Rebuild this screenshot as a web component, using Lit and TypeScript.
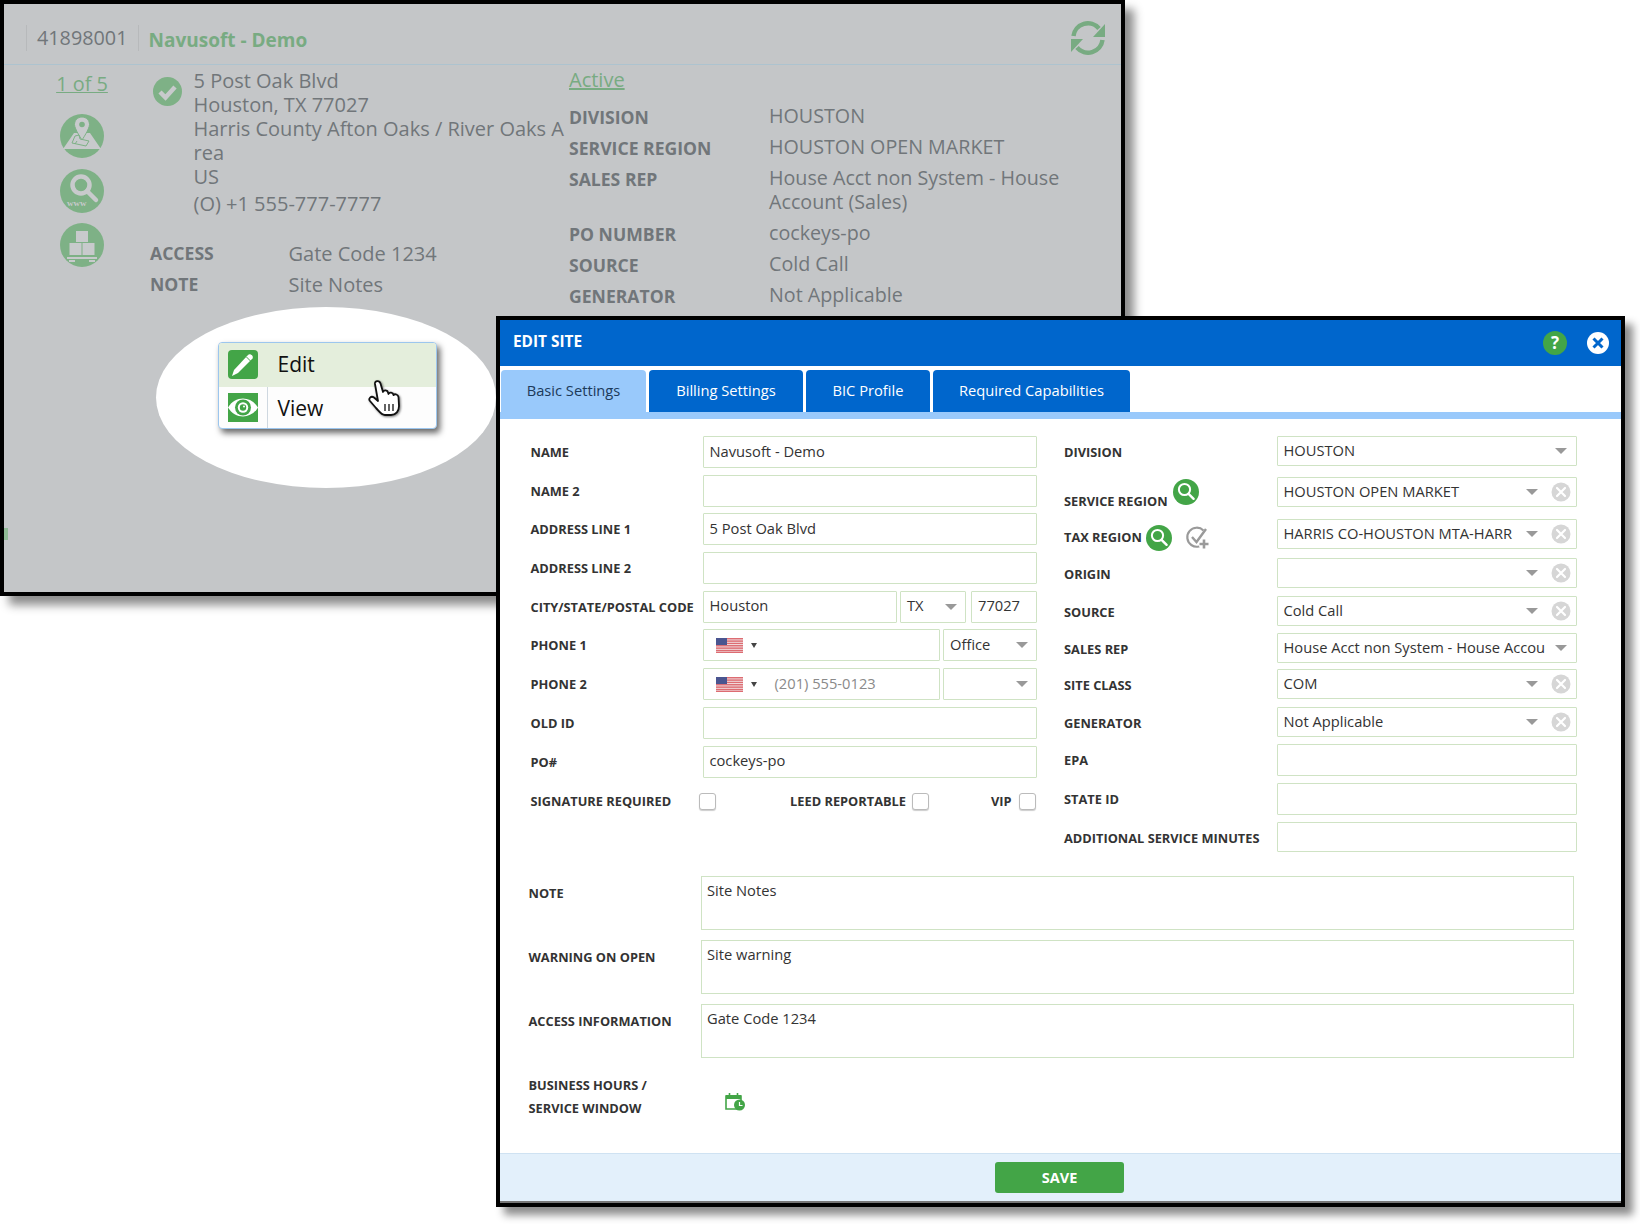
import { LitElement, html, css, svg } from "lit";
import { customElement } from "lit/decorators.js";

const caret = html`<i class="caret"></i>`;
const clear = html`<svg class="clr" viewBox="0 0 20 20"><circle cx="10" cy="10" r="9.5" fill="#d6d6d6"/><path d="M6 6l8 8M14 6l-8 8" stroke="#fff" stroke-width="2.2" stroke-linecap="round"/></svg>`;
const flag = html`<svg class="flag" viewBox="0 0 27 16" preserveAspectRatio="none">
  <rect width="27" height="16" fill="#f4f0f2"/>
  ${[0, 2.5, 5, 7.5, 10, 12.5].map((y) => svg`<rect y="${y}" width="27" height="1.6" fill="#dd6c72"/>`)}
  <rect y="14.6" width="27" height="1.4" fill="#dd6c72"/>
  <rect width="11" height="7.5" fill="#4a5590"/>
</svg>`;
const search = html`<svg class="srch" viewBox="0 0 26 26"><circle cx="13" cy="13" r="13" fill="#43a547"/><circle cx="11.5" cy="10.5" r="5.6" fill="none" stroke="#fff" stroke-width="2"/><path d="M15.6 14.8l5 5" stroke="#fff" stroke-width="2.4" stroke-linecap="round"/></svg>`;

type Row = { label: string; value?: string; clear?: boolean; caret?: boolean; cls?: string };
const rightRows: Row[] = [
  { label: "DIVISION", value: "HOUSTON", caret: true },
  { label: "SERVICE REGION", value: "HOUSTON OPEN MARKET", caret: true, clear: true, cls: "sr" },
  { label: "TAX REGION", value: "HARRIS CO-HOUSTON MTA-HARR", caret: true, clear: true, cls: "tr" },
  { label: "ORIGIN", value: "", caret: true, clear: true },
  { label: "SOURCE", value: "Cold Call", caret: true, clear: true },
  { label: "SALES REP", value: "House Acct non System - House Accou", caret: true },
  { label: "SITE CLASS", value: "COM", caret: true, clear: true },
  { label: "GENERATOR", value: "Not Applicable", caret: true, clear: true },
  { label: "EPA", cls: "tall" },
  { label: "STATE ID", cls: "tall" },
  { label: "ADDITIONAL SERVICE MINUTES" },
];
const simple = (label: string, value = "") => html`<div class="frow"><span class="lb">${label}</span><div class="inp grow">${value}</div></div>`;

@customElement("app-root")
export class AppRoot extends LitElement {
  static styles = css`
    :host { display: block; position: relative; width: 1640px; height: 1224px; background: #fff; overflow: hidden;
      font-family: "Open Sans", "Noto Sans", sans-serif; color: #333; }
    * { box-sizing: border-box; }

    .back { position: absolute; left: 0; top: 0; width: 1125px; height: 596px; border: 4px solid #000; background: #c4c6c8;
      box-shadow: 9px 9px 9px rgba(0,0,0,.45); color: #71767a; font-size: 20px; }
    .bh { height: 61px; border-bottom: 1px solid #adc3cf; display: flex; align-items: center; padding: 10px 14px 0 22px; }
    .bid { border-left: 1px solid #b7b9bb; border-right: 1px solid #b7b9bb; padding: 0 11px 0 10px; line-height: 26px; margin-top: -2px; font-size: 19.8px; }
    .bname { color: #78ab82; font-weight: 700; font-size: 19px; margin-left: 9px; margin-top: 2px; flex: 1; }
    .sync { width: 38px; height: 38px; margin-top: -2px; }
    .bb { display: grid; grid-template-columns: 145px 420px 1fr; }
    .nav { display: flex; flex-direction: column; align-items: center; padding: 5px 0 0 1px; width: 155px; }
    .nav a { text-decoration: underline; color: #78ab82; line-height: 28px; margin-bottom: 16px; font-size: 19.9px; }
    .nav svg { width: 44px; height: 44px; margin-bottom: 10.5px; }
    .mid { padding: 4px 0 0 4px; }
    .addr { display: grid; grid-template-columns: 40.5px 1fr; line-height: 24px; white-space: nowrap; height: 164px; }
    .addr svg { width: 29px; height: 29px; margin-top: 8px; }
    .ph { display: block; margin-top: 3px; }
    .kv { display: grid; grid-template-columns: 138.5px 1fr; line-height: 31px; margin: 5px 0 0 -3px; }
    .kv b, .rtg b { font-size: 17.6px; }
    .rt a { display: block; color: #78ab82; text-decoration: underline; line-height: 28px; margin-top: 1px; }
    .rtg { display: grid; grid-template-columns: 200px 340px; margin-top: 7px; }
    .rtg b { line-height: 30px; padding-top: .5px; }
    .rtg span { line-height: 24px; padding: 3px 0 4px; font-size: 19.7px; }

    .oval { position: absolute; left: 156px; top: 307px; width: 340px; height: 181px; border-radius: 50%; background: #fff; }
    .menu { position: absolute; left: 218px; top: 342px; width: 219px; height: 87px; border: 1px solid #9cc6ee; border-radius: 4px;
      background: #fdfdfd; box-shadow: 3px 4px 6px rgba(0,0,0,.6); color: #111; font-size: 21px; overflow: hidden; }
    .mi { display: flex; align-items: center; height: 44px; padding-left: 9px; }
    .mi + .mi { height: 42px; }
    .mi.on { background: #e4eedc; padding-bottom: 2px; }
    .mi.on svg { margin-top: 2px; }
    .mi svg { width: 30px; height: 30px; margin-right: 19.5px; flex: none; }
    .mi:not(.on) { background: linear-gradient(to right, transparent 48px, #cfd8e0 48px, #cfd8e0 49px, transparent 49px); }
    .hand { position: absolute; left: 368px; top: 380px; width: 34px; height: 37px; filter: drop-shadow(1px 1px 1px rgba(0,0,0,.5)); }
    .speck { position: absolute; left: 4px; top: 528px; width: 4px; height: 12px; background: #8fba95; }

    .modal { position: absolute; left: 496px; top: 316px; width: 1129px; height: 891px; border: 4px solid #000; background: #fff;
      box-shadow: 8px 8px 8px rgba(0,0,0,.45); display: flex; flex-direction: column; }
    .mh { height: 46px; background: #0066cc; color: #fff; display: flex; align-items: center; padding: 0 12px 3px 13px; flex: none; }
    .mh b { flex: 1; font-size: 15.400px; }
    .mh svg { display: block; margin-top: 2px; }
    .tabs { height: 53px; padding-top: 4px; border-bottom: 7px solid #99c9fb; display: flex; gap: 3px; flex: none; padding-left: 1px; }
    .tab { background: #0066cc; color: #fff; border-radius: 4px 4px 0 0; display: flex; align-items: center; justify-content: center; font-size: 14.7px; font-weight: 500; padding-bottom: 2px; }
    .tab.on { background: #99c9fb; color: #1c3a5a; }
    .t1 { width: 145px; } .t2 { width: 154px; } .t3 { width: 124px; } .t4 { width: 197px; }

    .top { display: grid; grid-template-columns: 506px 512.5px; column-gap: 27.5px; padding: 17px 0 0 30.5px; height: 457px; flex: none; }
    .lcol { display: flex; flex-direction: column; gap: 6.7px; }
    .frow { display: flex; align-items: center; height: 32px; gap: 3.5px; }
    .lb { font-size: 12.8px; font-weight: 700; color: #333; white-space: nowrap; }
    .frow > .lb { width: 172px; flex: none; margin-right: -3.5px; }
    .inp, .sel { height: 100%; border: 1px solid #cfe3c4; background: #fff; border-radius: 1px; font-size: 14.7px; color: #333;
      padding: 0 5px 3px 6px; display: flex; align-items: center; white-space: nowrap; position: relative; }
    .grow { flex: 1; }
    .caret { position: absolute; width: 0; height: 0; border-left: 6px solid transparent; border-right: 6px solid transparent; border-top: 6px solid #999; top: 50%; margin-top: -3px; }
    .sel .caret { right: 8px; }
    .w1 { width: 194px; } .w2 { width: 66px; } .w3 { flex: 1; margin-left: 1.5px; } .w4 { width: 237px; } .w5 { flex: 1; }
    .phone { padding-left: 12px; }
    .flag { width: 27px; height: 15px; margin: 3px 8px 0 0; flex: none; }
    .tiny { width: 0; height: 0; border-left: 3.5px solid transparent; border-right: 3.5px solid transparent; border-top: 5px solid #444; margin: 3px 18px 0 0; }
    .ph2 { color: #8a8a8a; }
    .checks { display: flex; align-items: center; height: 16px; margin-top: 9px; }
    .cb { width: 17px; height: 17px; border: 1px solid #bbb; border-radius: 3px; background: #fff; box-shadow: 0 1px 1px rgba(0,0,0,.2); flex: none; }
    .c1 { margin-left: 27.5px; } .c2 { margin-left: 74.5px; } .c3 { margin-left: 6px; } .c4 { margin-left: 62px; } .c5 { margin-left: 7px; }

    .rcol { display: grid; grid-template-rows: 41px 42px 39px 38px 37px 36px 38px 37px 39px 39px 30px; grid-template-columns: 212.5px 300px; align-items: start; }
    .rlb { display: flex; align-items: center; height: 30px; padding-top: 2px; position: relative; }
    .rlb.sr { padding-top: 18px; }
    .rlb.tr { padding-top: 6px; }
    .rsel { height: 30px; }
    .rsel.tall { height: 32px; }
    .rsel .caret { right: 9px; }
    .rsel .caret.mid2 { right: 38px; }
    .rsel .clr { position: absolute; right: 5px; top: 50%; margin-top: -10px; width: 20px; height: 20px; }
    .srch { width: 26px; height: 26px; position: absolute; }
    .sr .srch { left: 109px; top: 2px; }
    .tr .srch { left: 82px; top: 6px; }
    .chk { position: absolute; left: 120px; top: 6px; width: 26px; height: 26px; }

    .notes { display: flex; flex-direction: column; gap: 10px; padding-left: 28.5px; flex: none; }
    .nrow { display: flex; }
    .nrow .lb { width: 172.5px; padding-top: 7.500px; flex: none; }
    .ta { width: 873px; height: 54px; border: 1px solid #cfe3c4; font-size: 14.7px; padding: 2.500px 5px; line-height: 20px; }
    .hours { display: flex; align-items: center; margin-top: 16px; padding-left: 28.5px; flex: none; }
    .hours .lb { line-height: 23px; width: 196.5px; }
    .hours svg { width: 21px; height: 19px; margin-top: 8px; }
    .foot { margin-top: auto; height: 50px; background: #e3f0fb; border-top: 1px solid #cfe2f2; border-bottom: 2px solid #777; display: flex; justify-content: center; align-items: center; padding-right: 2px; flex: none; }
    .save { width: 129px; height: 31px; border-radius: 3px; background: #43a547; color: #fff; font-weight: 700; font-size: 14.5px; display: flex; align-items: center; justify-content: center; }
  `;

  private rightRow(r: Row) {
    return html`
      <div class="rlb ${r.cls ?? ""}"><span class="lb">${r.label}</span>
        ${r.cls === "sr" || r.cls === "tr" ? search : ""}
        ${r.cls === "tr" ? html`<svg class="chk" viewBox="0 0 26 26"><path d="M19.500 5.500A9.500 9.500 0 1 0 21 17" fill="none" stroke="#9a9a9a" stroke-width="2.200"/><path d="M8 12l4.500 5L22 4" fill="none" stroke="#9a9a9a" stroke-width="2.400"/><circle cx="20" cy="19" r="5.500" fill="#fff"/><path d="M20 14.500v9M15.500 19h9" stroke="#9a9a9a" stroke-width="2.600"/></svg>` : ""}
      </div>
      <div class="sel rsel ${r.cls === "tall" ? "tall" : ""}">
        <span>${r.value ?? ""}</span>
        ${r.caret ? html`<i class="caret ${r.clear ? "mid2" : ""}"></i>` : ""}
        ${r.clear ? clear : ""}
      </div>`;
  }

  render() {
    const g = "#7eb186", w = "#c8cacc";
    return html`
      <div class="back">
        <div class="bh">
          <span class="bid">41898001</span><span class="bname">Navusoft - Demo</span>
          <svg class="sync" viewBox="0 0 38 38">
            <path d="M4.500 17A14.500 14.500 0 0 1 30 9.500M33.500 21A14.500 14.500 0 0 1 8 28.500" fill="none" stroke="#78ab82" stroke-width="4.500"/>
            <path d="M36 5v13H24zM2 33V20h12z" fill="#78ab82"/>
          </svg>
        </div>
        <div class="bb">
          <div class="nav">
            <a>1 of 5</a>
            <svg viewBox="0 0 44 44"><circle cx="22" cy="22" r="22" fill="${g}"/>
              <path d="M14 19L3 35h38L30 19l-5 0-3 6-3-6z" fill="${w}"/>
              <path d="M22 3c-4.500 0-7.500 3.500-7.500 7.500 0 4.500 7.500 15.500 7.500 15.500s7.500-11 7.500-15.500C29.500 6.500 26.500 3 22 3z" fill="${w}" stroke="${g}" stroke-width="1"/>
              <circle cx="22" cy="10.500" r="2.800" fill="${g}"/>
              <path d="M15 22l-3 7 14 3 3-5-9-2-1-4zM17 27l-2 3" fill="none" stroke="${g}" stroke-width="1"/>
            </svg>
            <svg viewBox="0 0 44 44"><circle cx="22" cy="22" r="22" fill="${g}"/>
              <circle cx="21" cy="16" r="8.500" fill="none" stroke="${w}" stroke-width="4.500"/>
              <path d="M27 22l9 9" stroke="${w}" stroke-width="4.500" stroke-linecap="round"/>
              <text x="7" y="37" font-family="Liberation Serif" font-weight="700" font-size="9" fill="${w}">www</text>
            </svg>
            <svg viewBox="0 0 44 44"><circle cx="22" cy="22" r="22" fill="${g}"/>
              <rect x="16" y="8" width="12" height="11" fill="${w}"/>
              <rect x="9.500" y="20" width="12" height="12" fill="${w}"/><rect x="22.500" y="20" width="12" height="12" fill="${w}"/>
              <path d="M7 34h30v2H7zM9 37h6v2H9zM29 37h6v2h-6z" fill="${w}"/>
            </svg>
          </div>
          <div class="mid">
            <div class="addr">
              <svg viewBox="0 0 29 29"><circle cx="14.500" cy="14.500" r="14.500" fill="${g}"/><path d="M7 15l5.500 5.500L22 10" fill="none" stroke="${w}" stroke-width="4.500"/></svg>
              <div>5 Post Oak Blvd<br>Houston, TX 77027<br>Harris County Afton Oaks / River Oaks A<br>rea<br>US<span class="ph">(O) +1 555-777-7777</span></div>
            </div>
            <div class="kv"><b>ACCESS</b><span>Gate Code 1234</span><b>NOTE</b><span>Site Notes</span></div>
          </div>
          <div class="rt">
            <a>Active</a>
            <div class="rtg">
              <b>DIVISION</b><span>HOUSTON</span>
              <b>SERVICE REGION</b><span>HOUSTON OPEN MARKET</span>
              <b>SALES REP</b><span>House Acct non System - House Account (Sales)</span>
              <b>PO NUMBER</b><span>cockeys-po</span>
              <b>SOURCE</b><span>Cold Call</span>
              <b>GENERATOR</b><span>Not Applicable</span>
            </div>
          </div>
        </div>
      </div>
      <div class="speck"></div>

      <div class="oval"></div>
      <div class="menu">
        <div class="mi on">
          <svg viewBox="0 0 30 30"><rect width="30" height="29" rx="4" fill="#43a547"/><path d="M4 26l2-6L20 5c2-2 6 1 4.500 3.500L10 23z" fill="#fff"/><path d="M18.500 7l4 4" stroke="#43a547" stroke-width="1"/></svg>
          Edit
        </div>
        <div class="mi">
          <svg viewBox="0 0 30 30"><rect width="30" height="29" fill="#43a547"/><path d="M0 14.500C7 2.500 23 2.500 30 14.500 23 26.500 7 26.500 0 14.500z" fill="#fff"/><circle cx="15" cy="14.500" r="8" fill="#43a547"/><circle cx="15" cy="14.500" r="5.200" fill="#fff"/><circle cx="15" cy="14.500" r="3.200" fill="#43a547"/><circle cx="16" cy="13.500" r="1" fill="#fff"/></svg>
          View
        </div>
      </div>
      <svg class="hand" viewBox="0 0 34 37">
        <path d="M7 4C6.500.5 11.500 0 12.500 3.500L15 12c1-2.500 4.500-2 5 .5l.5 1.500c1-2.200 4.500-1.800 5 1 1.500-1.500 4.500-.5 5 2l.5 9c0 5-3 9-8 9h-6c-4 0-6-4-9-7l-6-7c-2-2.500 1-5.500 4-3.500l4 3.500z" fill="#fff" stroke="#111" stroke-width="1.800" stroke-linejoin="round"/>
        <path d="M17 24v7M21 24v7M25 24v7" stroke="#111" stroke-width="1.300"/>
      </svg>

      <div class="modal">
        <div class="mh">
          <b>EDIT SITE</b>
          <svg width="24" height="24" viewBox="0 0 24 24" style="margin-right:20px"><circle cx="12" cy="12" r="12" fill="#43a547"/><text x="12" y="18" text-anchor="middle" font-family="Open Sans" font-weight="700" font-size="17" fill="#fff">?</text></svg>
          <svg width="22" height="22" viewBox="0 0 22 22"><circle cx="11" cy="11" r="11" fill="#fff"/><path d="M6.500 6.500l9 9M15.500 6.500l-9 9" stroke="#0066cc" stroke-width="3"/></svg>
        </div>
        <div class="tabs">
          <div class="tab on t1">Basic Settings</div>
          <div class="tab t2">Billing Settings</div>
          <div class="tab t3">BIC Profile</div>
          <div class="tab t4">Required Capabilities</div>
        </div>
        <div class="top">
          <div class="lcol">
            ${simple("NAME", "Navusoft - Demo")}
            ${simple("NAME 2")}
            ${simple("ADDRESS LINE 1", "5 Post Oak Blvd")}
            ${simple("ADDRESS LINE 2")}
            <div class="frow"><span class="lb">CITY/STATE/POSTAL CODE</span>
              <div class="inp w1">Houston</div>
              <div class="sel w2">TX${caret}</div>
              <div class="inp w3">77027</div>
            </div>
            <div class="frow"><span class="lb">PHONE 1</span>
              <div class="inp w4 phone">${flag}<i class="tiny"></i></div>
              <div class="sel w5">Office${caret}</div>
            </div>
            <div class="frow"><span class="lb">PHONE 2</span>
              <div class="inp w4 phone">${flag}<i class="tiny"></i><span class="ph2">(201) 555-0123</span></div>
              <div class="sel w5">${caret}</div>
            </div>
            ${simple("OLD ID")}
            ${simple("PO#", "cockeys-po")}
            <div class="checks">
              <span class="lb">SIGNATURE REQUIRED</span><i class="cb c1"></i>
              <span class="lb c2">LEED REPORTABLE</span><i class="cb c3"></i>
              <span class="lb c4">VIP</span><i class="cb c5"></i>
            </div>
          </div>
          <div class="rcol">${rightRows.map((r) => this.rightRow(r))}</div>
        </div>
        <div class="notes">
          <div class="nrow"><span class="lb">NOTE</span><div class="ta">Site Notes</div></div>
          <div class="nrow"><span class="lb">WARNING ON OPEN</span><div class="ta">Site warning</div></div>
          <div class="nrow"><span class="lb">ACCESS INFORMATION</span><div class="ta">Gate Code 1234</div></div>
        </div>
        <div class="hours">
          <span class="lb">BUSINESS HOURS /<br>SERVICE WINDOW</span>
          <svg viewBox="0 0 21 19"><path d="M1 4h15v13H1z" fill="#fff" stroke="#43a547" stroke-width="1.600"/><path d="M1 3h15v4H1z" fill="#43a547"/><path d="M4.500 1v3M12.500 1v3" stroke="#43a547" stroke-width="1.600"/><circle cx="14.500" cy="13" r="5.500" fill="#43a547"/><path d="M14.500 10v3.500h3" fill="none" stroke="#fff" stroke-width="1.200"/></svg>
        </div>
        <div class="foot"><div class="save">SAVE</div></div>
      </div>
    `;
  }
}
